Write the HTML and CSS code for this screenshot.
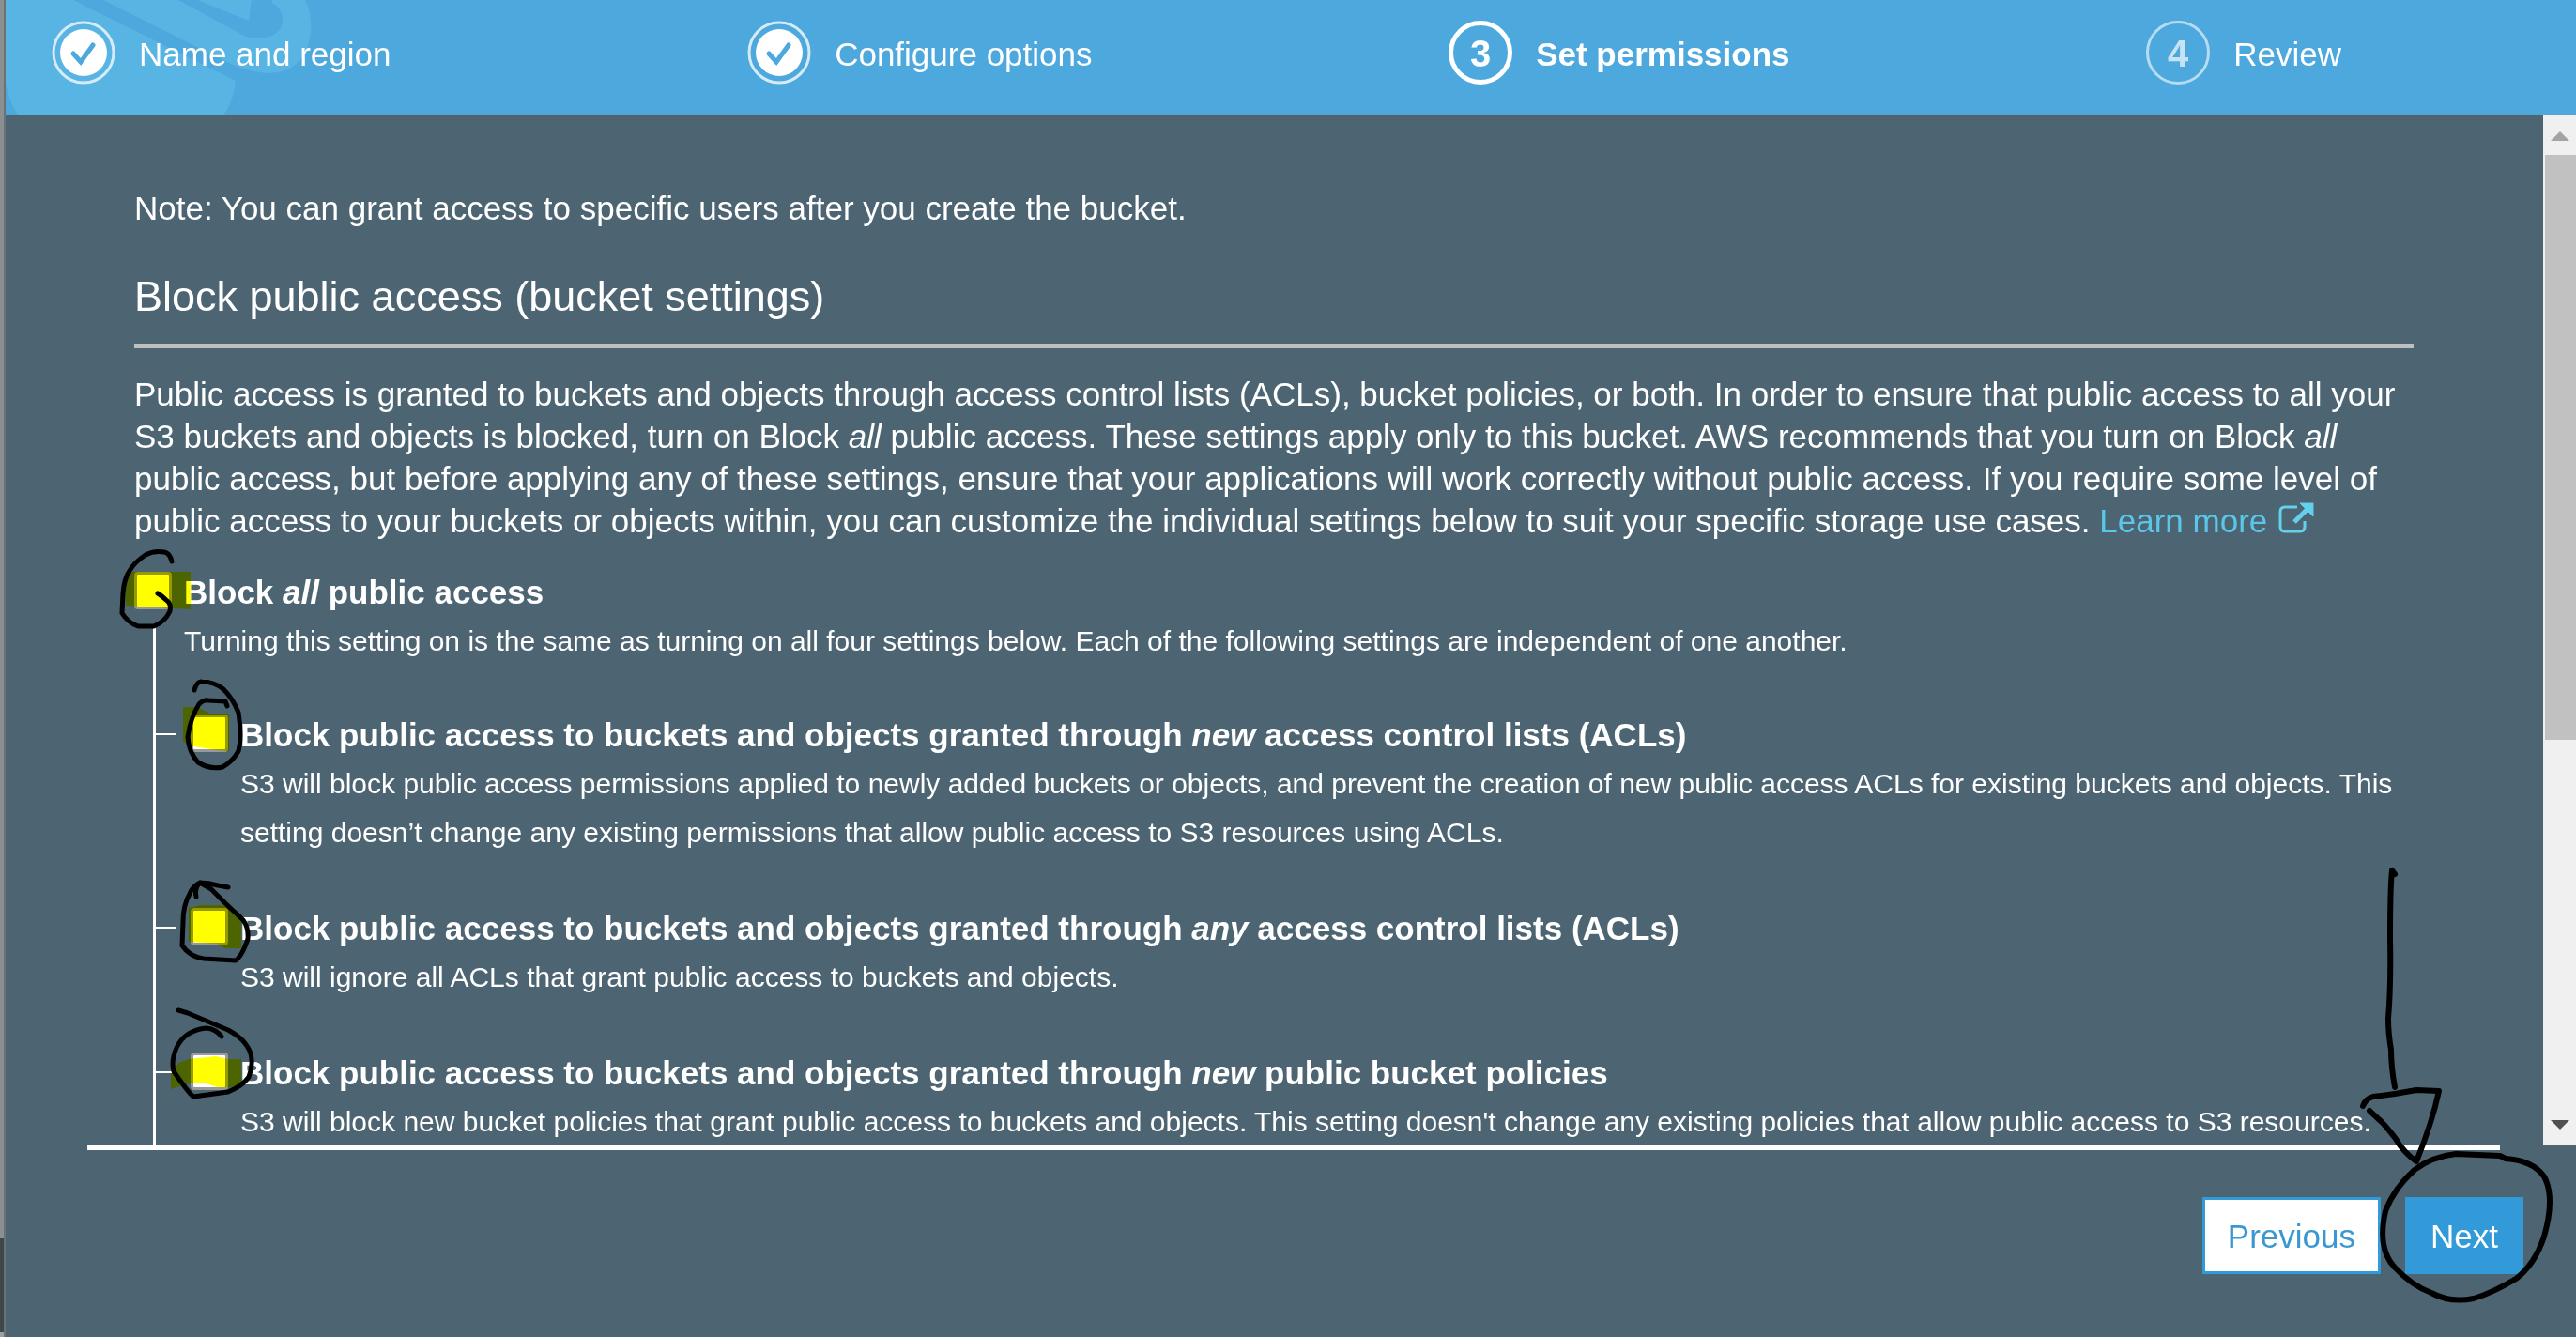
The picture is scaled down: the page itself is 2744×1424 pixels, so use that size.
FILE: index.html
```html
<!DOCTYPE html>
<html lang="en">
<head>
<meta charset="utf-8">
<title>Create bucket</title>
<link rel="stylesheet" href="styles.css">
</head>
<body>
<div class="page">
  <div class="backdrop"></div>
  <div class="dialog">
    <header class="steps">
      <svg class="watermark" width="340" height="123" viewBox="0 0 340 123" aria-hidden="true">
        <path d="M0 0H72L245 86Q243 108 232 123H14Q5 112 0 90Z"/>
        <path d="M204 0H262L259 22Z"/>
        <path d="M284 0H319Q327 16 325 36Q318 78 280 78Q262 78 240 68L104 0H184L254 38Q268 44 284 38Q298 30 294 14Q290 6 284 3Z"/>
      </svg>
      <div class="step">
        <svg class="badge" viewBox="0 0 68 68" aria-hidden="true"><circle class="ring" cx="34" cy="34" r="32"/><circle class="disc" cx="34" cy="34" r="25"/><path class="tick" d="M23 35L31 44L44 26"/></svg>
        <span class="label">Name and region</span>
      </div>
      <div class="step">
        <svg class="badge" viewBox="0 0 68 68" aria-hidden="true"><circle class="ring" cx="34" cy="34" r="32"/><circle class="disc" cx="34" cy="34" r="25"/><path class="tick" d="M23 35L31 44L44 26"/></svg>
        <span class="label">Configure options</span>
      </div>
      <div class="step current">
        <span class="number">3</span>
        <span class="label">Set permissions</span>
      </div>
      <div class="step pending">
        <span class="number">4</span>
        <span class="label">Review</span>
      </div>
    </header>

    <div class="viewport">
      <main class="content">
        <p class="note">Note: You can grant access to specific users after you create the bucket.</p>
        <h2>Block public access (bucket settings)</h2>
        <p class="intro">Public access is granted to buckets and objects through access control lists (ACLs), bucket policies, or both. In order to ensure that public access to all your S3 buckets and objects is blocked, turn on Block <em>all</em> public access. These settings apply only to this bucket. AWS recommends that you turn on Block <em>all</em> public access, but before applying any of these settings, ensure that your applications will work correctly without public access. If you require some level of public access to your buckets or objects within, you can customize the individual settings below to suit your specific storage use cases. <a href="#">Learn more <svg class="external" viewBox="0 0 38 34" aria-hidden="true"><path class="frame" d="M20 5H7Q2 5 2 10V26Q2 31 7 31H23Q28 31 28 26V20"/><path class="shaft" d="M17 21L31 7"/><path class="head" d="M23 1H37V15Z"/></svg></a></p>

        <div class="setting">
          <input type="checkbox" id="all">
          <div>
            <label for="all">Block <em>all</em> public access</label>
            <p>Turning this setting on is the same as turning on all four settings below. Each of the following settings are independent of one another.</p>
          </div>
        </div>
        <div class="tree">
          <div class="setting">
            <input type="checkbox" id="newacl">
            <div>
              <label for="newacl">Block public access to buckets and objects granted through <em>new</em> access control lists (ACLs)</label>
              <p>S3 will block public access permissions applied to newly added buckets or objects, and prevent the creation of new public access ACLs for existing buckets and objects. This setting doesn’t change any existing permissions that allow public access to S3 resources using ACLs.</p>
            </div>
          </div>
          <div class="setting">
            <input type="checkbox" id="anyacl">
            <div>
              <label for="anyacl">Block public access to buckets and objects granted through <em>any</em> access control lists (ACLs)</label>
              <p>S3 will ignore all ACLs that grant public access to buckets and objects.</p>
            </div>
          </div>
          <div class="setting">
            <input type="checkbox" id="newpolicy">
            <div>
              <label for="newpolicy">Block public access to buckets and objects granted through <em>new</em> public bucket policies</label>
              <p>S3 will block new bucket policies that grant public access to buckets and objects. This setting doesn't change any existing policies that allow public access to S3 resources.</p>
            </div>
          </div>
        </div>
      </main>
      <div class="scrollbar" aria-hidden="true">
        <svg class="arrow" viewBox="0 0 20 10"><path fill="#a3a3a3" d="M0 10L10 0L20 10Z"/></svg>
        <div class="track"><div class="thumb"></div><div class="rest"></div></div>
        <svg class="arrow" viewBox="0 0 20 10"><path fill="#505050" d="M0 0L10 10L20 0Z"/></svg>
      </div>
    </div>

    <hr>
    <footer class="actions">
      <button type="button" class="previous">Previous</button>
      <button type="button" class="next">Next</button>
    </footer>
  </div>

  <svg class="marker" width="2744" height="1424" viewBox="0 0 2744 1424" aria-hidden="true">
    <path d="M133 609L203 609V649L134 645Z"/>
    <path d="M195 753L210 753L224 760H244V800L232 799L206 795L195 790Z"/>
    <path d="M201 967L214 964H238L257 973V1010H240L231 1005L201 1003Z"/>
    <path d="M182 1160V1144L190 1132L201 1128L230 1125L243 1128H257V1158H232L219 1154L202 1154Z"/>
  </svg>
  <svg class="ink" width="2744" height="1424" viewBox="0 0 2744 1424" aria-hidden="true">
    <path d="M183 598Q181 589 175 588Q164 586 155 591Q143 599 138 608Q132 617 131 632L130 653Q136 663 147 667H164Q176 662 181 651Q183 643 177 639Q173 635 168 632"/>
    <path d="M207 735Q210 725 215 726Q228 726 238 734Q248 744 254 759Q258 785 254 800Q248 811 237 817Q224 820 211 812Q201 801 200 785Q203 764 212 750Q217 745 222 746L240 747L242 752"/>
    <path d="M243 945L232 943Q222 940 213 940Q205 944 202 952Q195 964 195 982L194 1007Q202 1019 217 1021L251 1023Q258 1018 264 1000Q265 988 259 980L240 962L225 947L213 940Q207 946 209 955"/>
    <path d="M190 1076L200 1079L243 1097Q262 1107 267 1122Q270 1135 265 1147Q258 1157 243 1163L206 1168Q200 1163 185 1141Q182 1130 188 1116Q197 1097 220 1095Q230 1096 236 1104"/>
    <g class="bold">
      <path d="M2551 931L2548 927Q2546 945 2546 1000Q2547 1050 2544 1085Q2544 1100 2547 1118Q2547 1136 2551 1158"/>
      <path d="M2517 1178Q2520 1170 2528 1168L2551 1165L2574 1161L2598 1162Q2591 1195 2574 1237Q2560 1227 2552 1213Q2542 1200 2537 1195L2524 1183"/>
      <path d="M2669 1234L2663 1231L2616 1229Q2590 1232 2572 1246Q2550 1266 2541 1290Q2532 1330 2551 1350Q2570 1370 2590 1377Q2610 1388 2635 1383Q2655 1377 2680 1362Q2700 1347 2710 1317Q2722 1275 2710 1253Q2698 1236 2669 1234"/>
    </g>
  </svg>
</div>
</body>
</html>
```

FILE: styles.css
```css
* { box-sizing: border-box; }

body {
  margin: 0;
  background: #4d6572;
  color: #fff;
  font: 35px/45px "Liberation Sans", Arial, sans-serif;
}

p, h2 { margin: 0; }

.page {
  position: relative;
  display: flex;
  height: 100vh;
  overflow: hidden;
}

.backdrop {
  flex: 0 0 6px;
  background: linear-gradient(#8b8f92 0 1319px, #3b484c 1319px 1419px, #9aa2a8 1419px);
  border-right: 2px solid #6b7276;
}

.dialog {
  flex: 1;
  display: flex;
  flex-direction: column;
  min-width: 0;
}

/* Wizard steps */
.steps {
  position: relative;
  display: flex;
  flex: none;
  justify-content: space-between;
  height: 123px;
  padding: 22px 250px 0 49px;
  background: #4da8dd;
  border-bottom: 2px solid #5aa3cc;
}

.watermark { position: absolute; left: 0; top: 0; fill: #57b4e3; }

.step {
  position: relative;
  display: flex;
  align-items: center;
  gap: 25px;
  height: 68px;
}

.label { padding-top: 3px; }

.badge { width: 68px; height: 68px; }
.ring { fill: none; stroke: #d5ebf8; stroke-width: 3; }
.disc { fill: #fff; }
.tick { fill: none; stroke: #4da8dd; stroke-width: 5; stroke-linecap: round; }

.number {
  width: 68px;
  height: 68px;
  border: 5px solid #fff;
  border-radius: 50%;
  font-size: 40px;
  font-weight: 700;
  line-height: 60px;
  text-align: center;
}

.current { font-weight: 700; }
.pending .number { border: 3px solid #b5dcf2; color: #c4e3f5; line-height: 64px; }

/* Scrolling body */
.viewport { display: flex; flex: 1; min-height: 0; overflow: hidden; }

.content { flex: 1; min-width: 0; padding: 76px 138px 0 137px; }

h2 {
  margin-top: 42px;
  padding-bottom: 20px;
  border-bottom: 5px solid #bfbfbf;
  font-size: 45px;
  font-weight: 400;
  line-height: 60px;
}

.intro { margin-top: 26px; }

a { color: #5bc7e8; text-decoration: none; }
.external { width: 38px; height: 34px; margin-left: 2px; vertical-align: -2px; fill: none; stroke: #63d0ec; }
.frame { stroke-width: 3; }
.shaft { stroke-width: 5; }
.head { fill: #63d0ec; stroke: #63d0ec; stroke-width: 1; }

/* Settings and the tree that joins them */
.setting { position: relative; display: flex; gap: 13px; }
.setting label { font-weight: 700; line-height: 52px; }
.setting p { font-size: 30px; line-height: 52px; }

input {
  flex: 0 0 40px;
  height: 40px;
  margin: 4px 0 0;
  appearance: none;
  background: #fff;
  border: 3px solid #999;
  border-radius: 4px;
}

.content > .setting { margin-top: 28px; }

.tree {
  position: relative;
  display: flex;
  flex-direction: column;
  gap: 50px;
  margin-left: 20px;
  padding: 48px 0 120px 40px;
}

.tree::before {
  content: "";
  position: absolute;
  left: 0;
  top: -41px;
  bottom: 0;
  width: 3px;
  background: #fff;
}

.tree .setting::before {
  content: "";
  position: absolute;
  left: -37px;
  top: 24px;
  width: 22px;
  height: 2px;
  background: #fff;
}

.scrollbar {
  flex: 0 0 35px;
  display: flex;
  flex-direction: column;
  align-items: center;
  padding: 17px 0;
  background: #f0f0f0;
}
.arrow { width: 20px; height: 10px; }
.track {
  flex: 1;
  display: flex;
  flex-direction: column;
  align-self: stretch;
  padding: 15px 0 0 2px;
}
.thumb { flex: 20; background: #c1c1c1; }
.rest { flex: 13; }

/* Footer */
hr {
  flex: none;
  align-self: stretch;
  height: 5px;
  margin: 0 81px 0 87px;
  border: 0;
  background: #fff;
}

.actions {
  display: flex;
  justify-content: flex-end;
  gap: 26px;
  padding: 50px 56px 67px;
}

button {
  height: 82px;
  padding: 0 24px;
  border: 3px solid #329ad9;
  color: #fff;
  background: #329ad9;
  font: inherit;
}
.previous { color: #3a98d0; background: #fff; }

/* Hand-drawn markup over the dialog */
.marker, .ink { position: absolute; left: 0; top: 0; pointer-events: none; }
.marker { fill: #ff0; mix-blend-mode: multiply; }
.ink { fill: none; stroke: #000; stroke-width: 5; stroke-linecap: round; stroke-linejoin: round; }
.bold { stroke-width: 6; }
```
